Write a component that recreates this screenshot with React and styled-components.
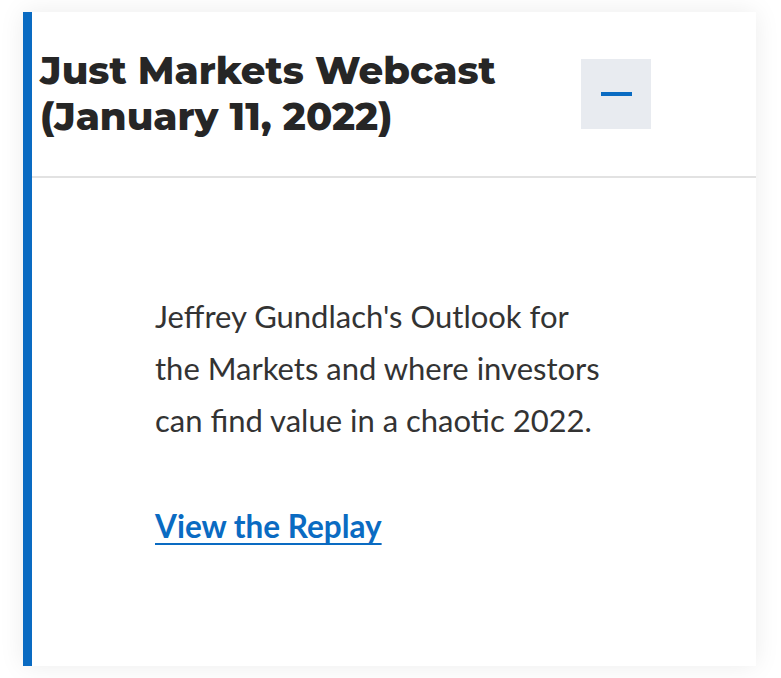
import styled, { createGlobalStyle } from 'styled-components';

const GlobalStyle = createGlobalStyle`
  body {
    margin: 0;
    background: #ffffff;
    font-family: "Lato", "Open Sans", sans-serif;
  }
`;

function App() {
  return (
    <>
      <GlobalStyle />
      <Page>
        <Card>
          <Header>
            <Title>Just Markets Webcast (January 11, 2022)</Title>
            <ToggleButton aria-label="Collapse">
              <Minus />
            </ToggleButton>
          </Header>
          <Body>
            <Summary>
              Jeffrey Gundlach's Outlook for the Markets and where investors can find value in a chaotic 2022.
            </Summary>
            <ReplayLink href="#">View the Replay</ReplayLink>
          </Body>
        </Card>
      </Page>
    </>
  );
}

const Page = styled.div`
  padding: 12px 25px 12px 23px;
  width: 781px;
  height: 678px;
  box-sizing: border-box;
`;

const Card = styled.section`
  background: #fff;
  border-left: 9px solid #0a6bc2;
  box-shadow: 0 0 24px rgba(0, 0, 0, 0.08);
  height: 654px;
  display: flex;
  flex-direction: column;
`;

const Header = styled.div`
  display: flex;
  align-items: center;
  justify-content: space-between;
  height: 164px;
  padding: 0 105px 0 8px;
  border-bottom: 2px solid #e2e2e2;
`;

const Title = styled.h2`
  margin: 0;
  width: 510px;
  font-family: "Montserrat", "Open Sans", sans-serif;
  font-weight: 800;
  font-size: 38.5px;
  line-height: 46px;
  color: #262626;
`;

const ToggleButton = styled.button`
  flex: none;
  width: 70px;
  height: 70px;
  border: none;
  background: #e8ebf0;
  display: flex;
  align-items: center;
  justify-content: center;
  cursor: pointer;
  padding: 0;
`;

const Minus = styled.span`
  display: block;
  width: 31px;
  height: 4px;
  background: #0a6bc2;
`;

const Body = styled.div`
  padding: 112px 0 0 123px;
`;

const Summary = styled.p`
  margin: 0;
  width: 465px;
  font-size: 31px;
  line-height: 52px;
  color: #333;
`;

const ReplayLink = styled.a`
  display: inline-block;
  margin-top: 54px;
  font-size: 31.5px;
  font-weight: 700;
  line-height: 52px;
  color: #0a6bc2;
  text-decoration: underline;
  text-decoration-thickness: 2px;
  text-underline-offset: 5px;
`;

export default App;
